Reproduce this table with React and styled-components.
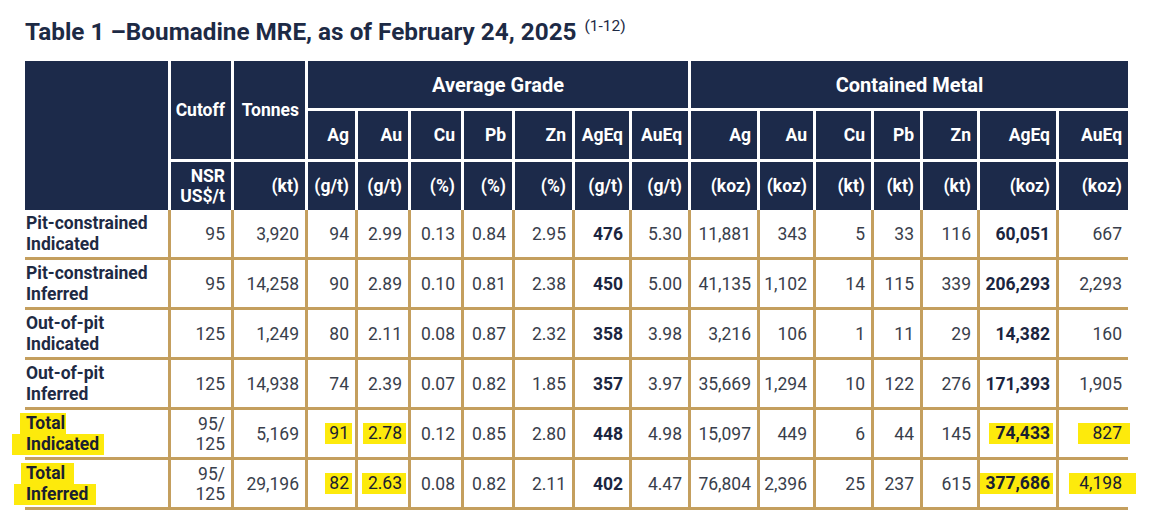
import React from 'react';
import styled, { createGlobalStyle } from 'styled-components';

const NAVY = '#1c2a4a';
const GOLD = '#c49f5e';
const MARKER = '#fdea0c';

const GlobalStyle = createGlobalStyle`
    body {
        margin: 0;
        background: #ffffff;
        font-family: Roboto, "Liberation Sans", Arial, sans-serif;
    }
`;

const columns = [146, 63, 74, 50, 53, 53, 51, 60, 57, 59, 69, 56, 58, 49, 57, 79, 69];

const grades = ['Ag', 'Au', 'Cu', 'Pb', 'Zn', 'AgEq', 'AuEq'];
const gradeUnits = ['(g/t)', '(g/t)', '(%)', '(%)', '(%)', '(g/t)', '(g/t)'];
const metalUnits = ['(koz)', '(koz)', '(kt)', '(kt)', '(kt)', '(koz)', '(koz)'];

const rows = [
    ['Pit-constrained', 'Indicated', ['95'], '3,920', '94', '2.99', '0.13', '0.84', '2.95', '476', '5.30', '11,881', '343', '5', '33', '116', '60,051', '667'],
    ['Pit-constrained', 'Inferred', ['95'], '14,258', '90', '2.89', '0.10', '0.81', '2.38', '450', '5.00', '41,135', '1,102', '14', '115', '339', '206,293', '2,293'],
    ['Out-of-pit', 'Indicated', ['125'], '1,249', '80', '2.11', '0.08', '0.87', '2.32', '358', '3.98', '3,216', '106', '1', '11', '29', '14,382', '160'],
    ['Out-of-pit', 'Inferred', ['125'], '14,938', '74', '2.39', '0.07', '0.82', '1.85', '357', '3.97', '35,669', '1,294', '10', '122', '276', '171,393', '1,905'],
    ['Total', 'Indicated', ['95/', '125'], '5,169', '91', '2.78', '0.12', '0.85', '2.80', '448', '4.98', '15,097', '449', '6', '44', '145', '74,433', '827'],
    ['Total', 'Inferred', ['95/', '125'], '29,196', '82', '2.63', '0.08', '0.82', '2.11', '402', '4.47', '76,804', '2,396', '25', '237', '615', '377,686', '4,198'],
];

// value index -> [left pad, right pad] of the marker stroke, for the total rows
const totalMarks = [
    { 2: [4, 3], 3: [5, 4], 14: [6, 3], 15: [14, 8] },
    { 2: [4, 3], 3: [6, 4], 14: [5, 3], 15: [10, 14] },
];
const labelMarks = [
    [[6, 1], [14, 5]],
    [[5, 9], [12, 8]],
];

const boldCols = [7, 14];

export default function App() {
    return (
        <Page>
            <GlobalStyle />
            <Title>
                Table 1 –Boumadine MRE, as of February 24, 2025<Sup>(1-12)</Sup>
            </Title>
            <Grid>
                <HeadCell $rowSpan={3} $noBottom />
                <HeadCell $rowSpan={2}>Cutoff</HeadCell>
                <HeadCell $rowSpan={2}>Tonnes</HeadCell>
                <HeadCell $span={7} $group>Average Grade</HeadCell>
                <HeadCell $span={7} $group $last>Contained Metal</HeadCell>

                {grades.map((g, i) => <HeadCell key={'g' + i}>{g}</HeadCell>)}
                {grades.map((g, i) => <HeadCell key={'m' + i} $last={i === 6}>{g}</HeadCell>)}

                <HeadCell $noBottom>
                    <Lines><span>NSR</span><span>US$/t</span></Lines>
                </HeadCell>
                <HeadCell $noBottom>(kt)</HeadCell>
                {gradeUnits.map((u, i) => <HeadCell key={'gu' + i} $noBottom>{u}</HeadCell>)}
                {metalUnits.map((u, i) => <HeadCell key={'mu' + i} $noBottom $last={i === 6}>{u}</HeadCell>)}

                {rows.map((row, r) => {
                    const [first, second, cutoff, ...values] = row;
                    const total = r >= 4 ? r - 4 : -1;
                    return (
                        <React.Fragment key={r}>
                            <LabelCell>
                                {total >= 0 ? (
                                    <>
                                        <Mark $l={labelMarks[total][0][0]} $r={labelMarks[total][0][1]}>{first}</Mark>
                                        <Mark $l={labelMarks[total][1][0]} $r={labelMarks[total][1][1]}>{second}</Mark>
                                    </>
                                ) : (
                                    <>
                                        <span>{first}</span>
                                        <span>{second}</span>
                                    </>
                                )}
                            </LabelCell>
                            <BodyCell>
                                <Lines>{cutoff.map((c) => <span key={c}>{c}</span>)}</Lines>
                            </BodyCell>
                            {values.map((v, i) => {
                                const mark = total >= 0 ? totalMarks[total][i + 1] : null;
                                return (
                                    <BodyCell key={i} $bold={boldCols.includes(i + 1)} $last={i === values.length - 1}>
                                        {mark ? <Mark $l={mark[0]} $r={mark[1]}>{v}</Mark> : v}
                                    </BodyCell>
                                );
                            })}
                        </React.Fragment>
                    );
                })}
            </Grid>
        </Page>
    );
}

const Page = styled.div`
    padding: 0 0 0 25px;
`;

const Title = styled.h1`
    margin: 0;
    height: 61px;
    box-sizing: border-box;
    padding-top: 20px;
    font-size: 24.3px;
    line-height: 24px;
    font-weight: 700;
    color: #1d2a45;
    white-space: nowrap;
`;

const Sup = styled.span`
    font-size: 15.5px;
    font-weight: 400;
    margin-left: 8px;
    position: relative;
    top: -9px;
`;

const Grid = styled.div`
    display: grid;
    width: ${columns.reduce((a, b) => a + b, 0)}px;
    grid-template-columns: ${columns.map((c) => c + 'px').join(' ')};
    grid-template-rows: 50px 51px 48px repeat(6, 50px);
`;

const HeadCell = styled.div`
    grid-column: span ${(p) => p.$span || 1};
    grid-row: span ${(p) => p.$rowSpan || 1};
    box-sizing: border-box;
    display: flex;
    align-items: center;
    justify-content: ${(p) => (p.$group ? 'center' : 'flex-end')};
    padding: 0 6px;
    background: ${NAVY};
    color: #ffffff;
    font-size: ${(p) => (p.$group ? '20px' : '17.5px')};
    font-weight: 700;
    line-height: 20px;
    text-align: right;
    white-space: nowrap;
    border-right: ${(p) => (p.$last ? 'none' : '3px solid #ffffff')};
    border-bottom: ${(p) => (p.$noBottom ? 'none' : '3px solid #ffffff')};
`;

const Lines = styled.div`
    display: flex;
    flex-direction: column;
    align-items: flex-end;
    line-height: 20px;
`;

const BodyCell = styled.div`
    box-sizing: border-box;
    display: flex;
    align-items: center;
    justify-content: flex-end;
    padding: 0 6px;
    background: #ffffff;
    color: ${(p) => (p.$bold ? '#1b2540' : '#393e4b')};
    font-size: 17.5px;
    font-weight: ${(p) => (p.$bold ? 700 : 400)};
    white-space: nowrap;
    border-right: ${(p) => (p.$last ? 'none' : `3px solid ${GOLD}`)};
    border-bottom: 3px solid ${GOLD};
`;

const LabelCell = styled.div`
    box-sizing: border-box;
    display: flex;
    flex-direction: column;
    justify-content: center;
    align-items: flex-start;
    padding: 0 0 0 1px;
    background: #ffffff;
    color: #1e2a44;
    font-size: 17.5px;
    font-weight: 700;
    line-height: 21px;
    white-space: nowrap;
    border-right: 3px solid ${GOLD};
    border-bottom: 3px solid ${GOLD};
`;

const Mark = styled.span`
    background: ${MARKER};
    color: #1a2030;
    padding: 1px ${(p) => p.$r}px 1px ${(p) => p.$l}px;
    margin: 0 ${(p) => -p.$r}px 0 ${(p) => -p.$l}px;
    line-height: 19px;
`;
